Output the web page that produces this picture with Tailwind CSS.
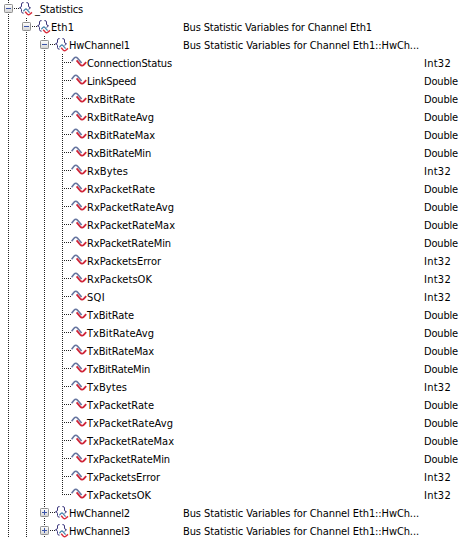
<!DOCTYPE html>
<html lang="en">
<head>
<meta charset="utf-8">
<title>Statistics</title>
<script src="https://cdn.jsdelivr.net/npm/@tailwindcss/browser@4"></script>
</head>
<body class="bg-white overflow-hidden">
<svg class="absolute w-0 h-0">
  <defs>
    <linearGradient id="face" x1="0" y1="0" x2="0" y2="1"><stop offset="0" stop-color="#fff"/><stop offset="1" stop-color="#d4d4d4"/></linearGradient>
    <symbol id="box" viewBox="0 0 9 9"><rect x=".5" y=".5" width="8" height="8" rx=".8" fill="url(#face)" stroke="#919191"/><path d="M2 4.5h5" stroke="#3b54a8"/></symbol>
    <symbol id="plus" viewBox="0 0 9 9"><use href="#box" width="9" height="9"/><path d="M4.5 2v5" stroke="#3b54a8"/></symbol>
    <symbol id="wave" viewBox="0 0 16 13"><path d="M.6 6.2 3 3.2Q4.8 1.2 6.6 3.2L10.6 8" fill="none" stroke="#6675a0" stroke-width="1.6"/><path d="M5.6 5.4 9.2 9.6Q11 11.6 12.7 9.8L15.2 7.2" fill="none" stroke="#cf2438" stroke-width="1.8"/></symbol>
    <symbol id="group" viewBox="0 0 14 15"><path d="M4.6.6Q2.5.4 2.5 2V4Q2.5 5.4.5 5.8 2.5 6.2 2.5 7.6V9.6Q2.5 11.2 4.6 11.2M7.4.6Q9.5.4 9.5 2V4Q9.5 5.4 11.5 5.8 10 6.2 9.8 7.6" fill="none" stroke="#3b367c" stroke-width="1"/><path d="M4.4 9.2 6 7.4Q7 6.5 8 7.6L10.6 10.6" fill="none" stroke="#4a86ad" stroke-width="1.3"/><path d="M6.2 9.8 8.4 12.3Q9.6 13.4 10.8 12.3L13 10.4" fill="none" stroke="#d92f3d" stroke-width="1.4"/></symbol>
  </defs>
</svg>
<main id="tree" class="flex flex-col w-[463px] text-[11px] leading-[18px] text-black font-['DejaVu_Sans_Condensed','DejaVu_Sans',sans-serif]"></main>
<script>
const leaves = [
  ['ConnectionStatus', 'Int32', 85], ['LinkSpeed', 'Double', 49], ['RxBitRate', 'Double', 48],
  ['RxBitRateAvg', 'Double', 67], ['RxBitRateMax', 'Double', 68], ['RxBitRateMin', 'Double', 64],
  ['RxBytes', 'Int32', 41], ['RxPacketRate', 'Double', 68], ['RxPacketRateAvg', 'Double', 87],
  ['RxPacketRateMax', 'Double', 88], ['RxPacketRateMin', 'Double', 84], ['RxPacketsError', 'Int32', 74],
  ['RxPacketsOK', 'Int32', 65], ['SQI', 'Int32', 18], ['TxBitRate', 'Double', 47],
  ['TxBitRateAvg', 'Double', 67], ['TxBitRateMax', 'Double', 67], ['TxBitRateMin', 'Double', 63],
  ['TxBytes', 'Int32', 40], ['TxPacketRate', 'Double', 67], ['TxPacketRateAvg', 'Double', 86],
  ['TxPacketRateMax', 'Double', 87], ['TxPacketRateMin', 'Double', 83], ['TxPacketsError', 'Int32', 73],
  ['TxPacketsOK', 'Int32', 64]
];
const bus = 'Bus Statistic Variables for Channel Eth1';
const rows = [
  { d: 0, n: '_Statistics', w: 48 },
  { d: 1, n: 'Eth1', w: 23, desc: bus, dw: 189 },
  { d: 2, n: 'HwChannel1', w: 61, desc: bus + '::HwCh...', dw: 236 },
  ...leaves.map(([n, type, w]) => ({ d: 3, n, w, type })),
  { d: 2, n: 'HwChannel2', w: 61, desc: bus + '::HwCh...', dw: 236, closed: true },
  { d: 2, n: 'HwChannel3', w: 61, desc: bus + '::HwCh...', dw: 236, closed: true }
];
const label = (text, w) => `<span data-w="${w}" class="inline-block whitespace-pre pt-px">${text}</span>`;
document.getElementById('tree').innerHTML = rows.map((r, i) => {
  const x = 8 + r.d * 18, leaf = r.d === 3;
  let lines = '';
  for (let k = 0; k <= r.d; k++) {
    const end = k === 3 && i === 27 ? 9 : 18;
    lines += `<path d="M${8.5 + k * 18} 0V${end}" stroke="#222" stroke-dasharray="1 1"/>`;
  }
  lines += `<path d="M${x + (leaf ? 2 : 6)} 8.5H${x + (leaf ? 9 : 11)}" stroke="#222" stroke-dasharray="1 1"/>`;
  const icon = leaf
    ? `<use href="#wave" x="71" y="1" width="16" height="13"/>`
    : `<use href="#${r.closed ? 'plus' : 'box'}" x="${x - 4}" y="4" width="9" height="9"/><use href="#group" x="${x + 11}" y="2" width="14" height="15"/>`;
  const gutter = [35, 51, 69, 87][r.d];
  return `<div class="flex h-[18px] shrink-0">
    <div class="flex w-[183px] shrink-0"><svg class="shrink-0 overflow-visible" width="${gutter}" height="18">${lines}${icon}</svg>${label(r.n, r.w)}</div>
    <div class="w-[241px] shrink-0">${r.desc ? label(r.desc, r.dw) : ''}</div>
    <div>${r.type ? label(r.type, r.type === 'Int32' ? 27 : 34) : ''}</div>
  </div>`;
}).join('');
function fit() {
  document.querySelectorAll('[data-w]').forEach(el => {
    el.style.letterSpacing = '0px';
    const spacing = (el.dataset.w - el.getBoundingClientRect().width) / el.textContent.length;
    el.style.letterSpacing = spacing + 'px';
  });
}
fit();
window.addEventListener('load', () => { fit(); setTimeout(fit, 50); });
</script>
</body>
</html>
